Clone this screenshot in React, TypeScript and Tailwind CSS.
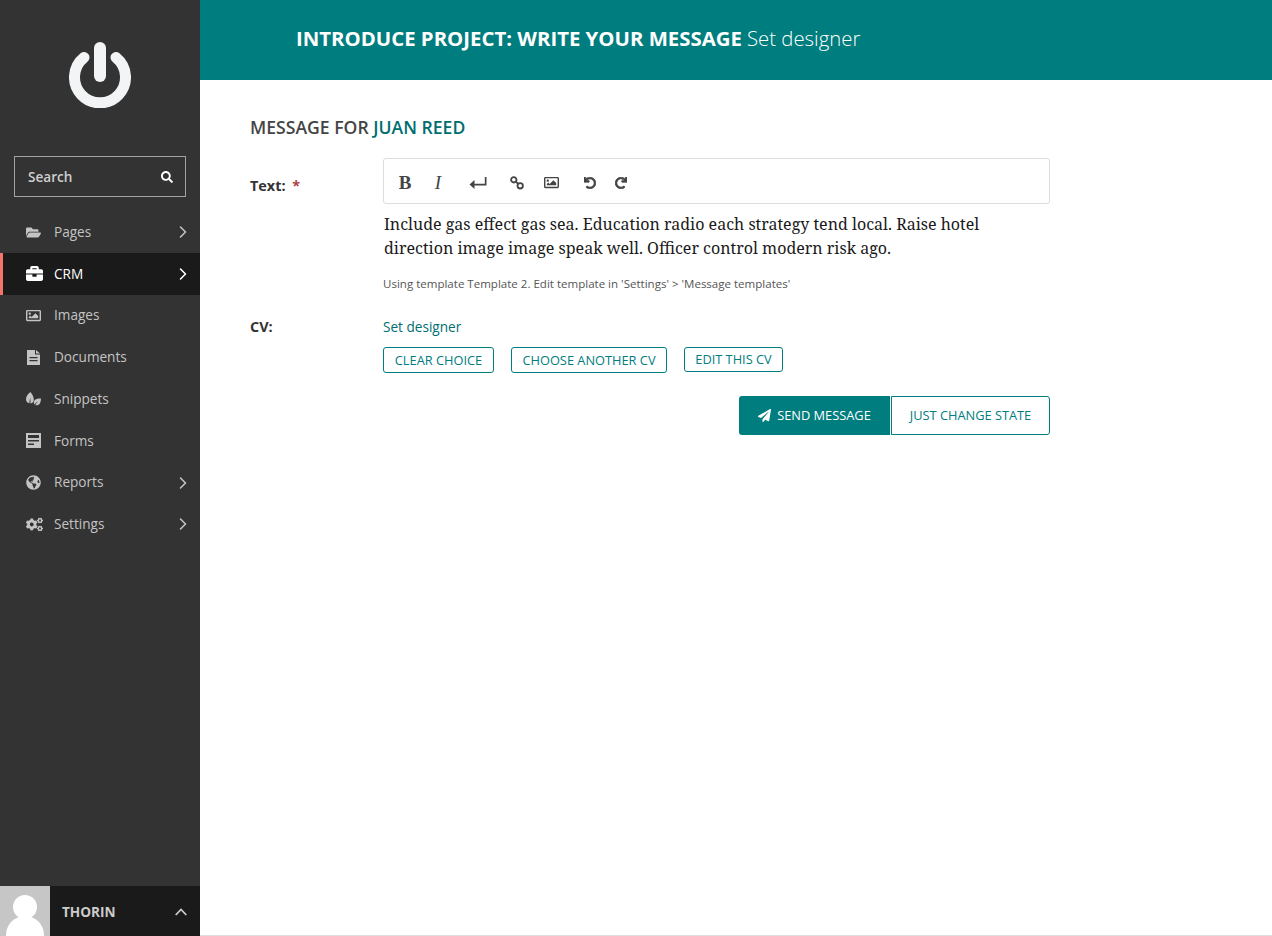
import {FaBriefcase, FaCogs, FaFolderOpen, FaGlobeAmericas, FaPaperPlane, FaRedo, FaRegImage, FaSearch, FaUndo} from 'react-icons/fa'
import {LuChevronRight} from 'react-icons/lu'
import type {ReactNode} from 'react'

function LeafIcon() {
  return (
    <svg viewBox="0 0 15 15" className="w-[15px] h-[15px]" fill="currentColor">
      <path d="M4.500 0C1.800 2 0 4.500 0 7c0 2.400 1.400 4 3.400 4.300.1-2 .3-3.800.8-5.600.3 2 .3 3.900.3 5.700 2-.1 3.300-1.600 3.300-3.600C7.800 5 6.500 2.500 4.500 0z" />
      <path d="M15 6.500c-2.600-.3-5.200.2-6.400 1.800-1 1.300-1 2.900-.2 4.100 1-1.300 2.200-2.200 3.500-2.900-1.100 1.100-2 2.200-2.600 3.500 1.400.7 3 .3 4-.8C14.400 11 15 9 15 6.500z" />
    </svg>
  )
}

function FormIcon() {
  return (
    <svg viewBox="0 0 15 15" className="w-[15px] h-[15px]" fill="currentColor">
      <path fillRule="evenodd" d="M0 0h15v15H0zM2 2v3h11V2zM2 7v1.500h11V7zM2 10.500V12h6v-1.500z" />
    </svg>
  )
}

function DocIcon() {
  return (
    <svg viewBox="0 0 13 15" className="w-[13px] h-[15px]" fill="currentColor">
      <path fillRule="evenodd" d="M0 0h8v4.500h5V15H0zM2.500 7v1.300h8V7zM2.500 10v1.300h8V10z" />
      <path d="M9 0l4 3.500H9z" />
    </svg>
  )
}

type NavItem = {label: string; icon: ReactNode; arrow?: boolean; active?: boolean}

const navItems: NavItem[] = [
  {label: 'Pages', icon: <FaFolderOpen className="w-[15px] h-[15px]" />, arrow: true},
  {label: 'CRM', icon: <FaBriefcase className="w-[17px] h-[17px]" />, arrow: true, active: true},
  {label: 'Images', icon: <FaRegImage className="w-[15px] h-[15px]" />},
  {label: 'Documents', icon: <span className="ml-[1px] flex"><DocIcon /></span>},
  {label: 'Snippets', icon: <LeafIcon />},
  {label: 'Forms', icon: <FormIcon />},
  {label: 'Reports', icon: <FaGlobeAmericas className="w-[15px] h-[15px]" />, arrow: true},
  {label: 'Settings', icon: <FaCogs className="w-[17px] h-[17px]" />, arrow: true},
]

function Sidebar() {
  return (
    <aside className="w-[200px] shrink-0 h-full bg-[#333333] flex flex-col">
      <div className="h-[156px] shrink-0 flex justify-center pt-[42px]">
        <svg viewBox="0 0 62 66" className="w-[62px] h-[66px]" fill="none" stroke="#f3f4f5">
          <path d="M15 15.500A25.500 25.500 0 1 0 47 15.500" strokeWidth="11" strokeLinecap="round" />
          <path d="M31 6v28" strokeWidth="12" strokeLinecap="round" />
        </svg>
      </div>
      <div className="mx-[14px] h-[41px] border border-[#a3a3a3] flex items-center justify-between pl-[13px] pr-[12px] pt-[1px] mb-[14.300px]">
        <span className="text-[13.6px] font-semibold text-[#cfcfcf]">Search</span>
        <FaSearch className="w-[12px] h-[12px] text-white" />
      </div>
      <nav className="flex flex-col">
        {navItems.map(item => (
          <div
            key={item.label}
            className={`h-[41.75px] flex items-center pr-[7px] border-l-[3px] ${
              item.active ? 'bg-[#1a1a1a] border-[#f4736b] text-white' : 'border-transparent text-[#c4c4c4]'
            }`}
          >
            <span className="w-[24px] ml-[23px] mr-[4px] flex justify-start items-center h-[18px]">{item.icon}</span>
            <span className="text-[13.6px] flex-1">{item.label}</span>
            {item.arrow && <LuChevronRight className="w-[20px] h-[20px]" strokeWidth={1.9} />}
          </div>
        ))}
      </nav>
      <div className="mt-auto h-[50px] flex bg-[#1a1a1a]">
        <div className="w-[50px] h-[50px] bg-[#c6c6c6] overflow-hidden">
          <svg viewBox="0 0 50 50" className="w-[50px] h-[50px]" fill="#fff">
            <circle cx="25" cy="21" r="12" />
            <ellipse cx="25" cy="49" rx="19" ry="19" />
          </svg>
        </div>
        <div className="flex-1 flex items-center justify-between pl-[12px] pr-[13px] pt-[2px]">
          <span className="text-[13.6px] font-bold text-[#cccccc]">THORIN</span>
          <svg viewBox="0 0 12 8" className="w-[12px] h-[8px]" fill="none" stroke="#cccccc" strokeWidth="1.800">
            <path d="M.7 7L6 1.500 11.300 7" />
          </svg>
        </div>
      </div>
    </aside>
  )
}

function ToolbarButton({children, className = ''}: {children: ReactNode; className?: string}) {
  return <span className={`flex items-center justify-center text-[#444444] ${className}`}>{children}</span>
}

function Toolbar() {
  return (
    <div className="h-[46px] border border-[#dddddd] rounded-[3px] flex items-center pl-[14px] pt-[3px]">
      <ToolbarButton className="w-[14px] font-['Liberation_Serif',serif] font-bold text-[19px] leading-none">B</ToolbarButton>
      <ToolbarButton className="w-[14px] ml-[19px] font-['Liberation_Serif',serif] italic text-[19px] leading-none">I</ToolbarButton>
      <ToolbarButton className="w-[18px] ml-[24px]">
        <svg viewBox="0 0 18 14" className="w-[18px] h-[14px]" fill="currentColor">
          <path d="M15.800 1H17.500v8.500H5.500V13L.5 8.500 5.500 4v3.700h10.300z" />
        </svg>
      </ToolbarButton>
      <ToolbarButton className="w-[14px] ml-[23px]">
        <svg viewBox="0 0 14 14" className="w-[14px] h-[14px]" fill="none" stroke="currentColor" strokeWidth="1.800">
          <circle cx="3.800" cy="3.800" r="2.700" />
          <circle cx="10.200" cy="9.800" r="2.700" />
          <path d="M5.800 5.800l2.400 2" />
        </svg>
      </ToolbarButton>
      <ToolbarButton className="w-[15px] ml-[20px]"><FaRegImage className="w-[15px] h-[15px]" /></ToolbarButton>
      <ToolbarButton className="w-[14px] ml-[24px]"><FaUndo className="w-[12px] h-[12px]" stroke="currentColor" strokeWidth={30} /></ToolbarButton>
      <ToolbarButton className="w-[14px] ml-[17px]"><FaRedo className="w-[12px] h-[12px]" stroke="currentColor" strokeWidth={30} /></ToolbarButton>
    </div>
  )
}

function OutlineButton({children, className = ''}: {children: ReactNode; className?: string}) {
  return (
    <button className={`border border-[#007d7e] rounded-[3px] text-[12.800px] text-[#007d7e] leading-none bg-white ${className}`}>
      {children}
    </button>
  )
}

export default function App() {
  return (
    <div className="w-[1272px] h-[936px] flex overflow-hidden bg-white font-['Open_Sans',sans-serif]">
      <Sidebar />
      <main className="flex-1 flex flex-col border-b border-[#dddddd]">
        <header className="h-[80px] bg-[#007d7e] flex items-center pl-[96px] pb-[3px] text-[20.370px] text-white">
          <span className="font-bold">INTRODUCE PROJECT: WRITE YOUR MESSAGE</span>
          <span className="font-light ml-[5px]">Set designer</span>
        </header>
        <div className="pl-[50px] w-[850px]">
          <h2 className="mt-[35px] h-[24px] leading-[24px] text-[17.600px] font-semibold text-[#444444]">
            MESSAGE FOR <span className="text-[#006e70]">JUAN REED</span>
          </h2>
          <div className="flex mt-[19px]">
            <div className="w-[133px] shrink-0 pt-[18px] text-[14.400px] leading-[20px] font-bold text-[#333333]">
              Text: <span className="text-[#a94442] ml-[3px]">*</span>
            </div>
            <div className="flex-1">
              <Toolbar />
              <p className="mt-[8px] pl-[1px] text-[16px] leading-[24px] text-[#1a1a1a] font-['Noto_Serif','DejaVu_Serif',serif]">
                Include gas effect gas sea. Education radio each strategy tend local. Raise hotel direction image image speak well. Officer control modern risk ago.
              </p>
              <p className="mt-[16px] text-[11.540px] leading-[16px] text-[#555555]">
                Using template Template 2. Edit template in 'Settings' &gt; 'Message templates'
              </p>
            </div>
          </div>
          <div className="flex mt-[25px]">
            <div className="w-[133px] shrink-0 text-[14.400px] leading-[20px] font-bold text-[#333333]">CV:</div>
            <div className="flex-1">
              <div className="text-[13.600px] leading-[20px] text-[#006e70]">Set designer</div>
              <div className="flex items-start gap-[17px] mt-[10px]">
                <OutlineButton className="h-[26px] w-[111px]">CLEAR CHOICE</OutlineButton>
                <OutlineButton className="h-[26px] w-[156px]">CHOOSE ANOTHER CV</OutlineButton>
                <OutlineButton className="h-[25px] w-[99px]">EDIT THIS CV</OutlineButton>
              </div>
            </div>
          </div>
          <div className="flex justify-end gap-[1px] mt-[23px]">
            <button className="h-[39px] w-[151px] bg-[#007d7e] text-white rounded-l-[3px] flex items-center justify-center gap-[6px] text-[12.800px]">
              <FaPaperPlane className="w-[13px] h-[13px]" />
              SEND MESSAGE
            </button>
            <button className="h-[39px] w-[159px] border border-[#007d7e] text-[#007d7e] rounded-r-[3px] text-[12.800px]">
              JUST CHANGE STATE
            </button>
          </div>
        </div>
      </main>
    </div>
  )
}
